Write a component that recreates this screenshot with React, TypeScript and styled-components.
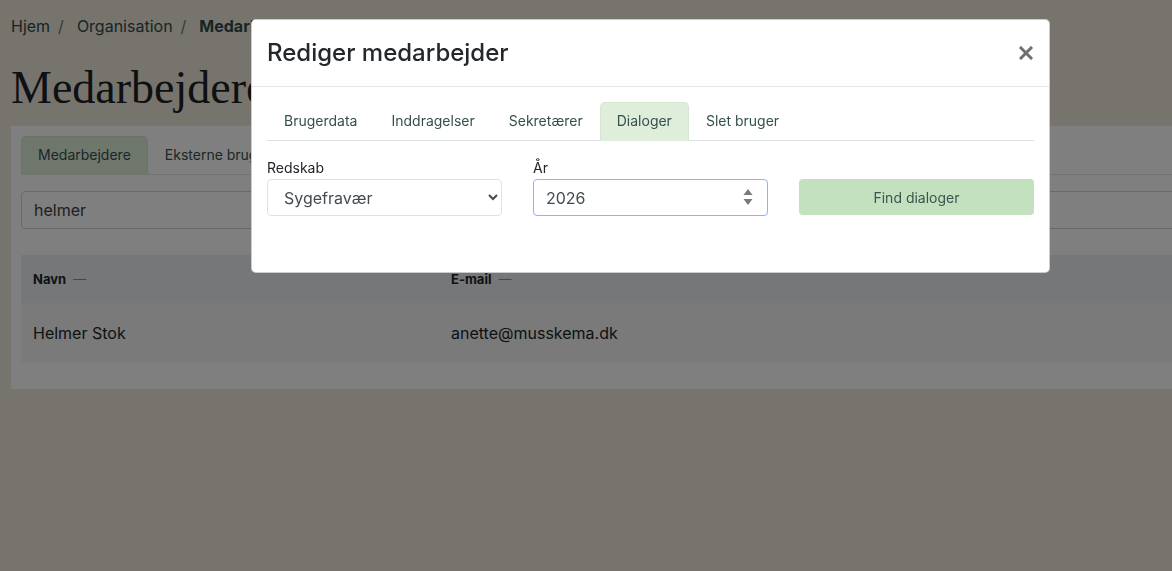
import { useState } from 'react';
import styled, { createGlobalStyle } from 'styled-components';

const GlobalStyle = createGlobalStyle`
  html, body {
    margin: 0;
    padding: 0;
    height: 100%;
    overflow: hidden;
  }
  body {
    background: #eee9db;
    font-family: Inter, "Noto Sans", sans-serif;
    color: #212529;
  }
`;

const pageTabs = ['Medarbejdere', 'Eksterne brugere'];
const modalTabs = ['Brugerdata', 'Inddragelser', 'Sekretærer', 'Dialoger', 'Slet bruger'];

function App() {
  const [activeTab, setActiveTab] = useState('Dialoger');
  const [year, setYear] = useState('2026');

  return (
    <>
      <GlobalStyle />
      <Page>
        <Breadcrumb>
          <Crumb>Hjem</Crumb>
          <Divider>/</Divider>
          <Crumb>Organisation</Crumb>
          <Divider>/</Divider>
          <Crumb $current>Medarbejdere</Crumb>
        </Breadcrumb>
        <PageTitle>Medarbejdere</PageTitle>
        <Card>
          <TabList>
            {pageTabs.map((tab, i) => (
              <Tab key={tab} $active={i === 0}>
                {tab}
              </Tab>
            ))}
          </TabList>
          <SearchInput defaultValue="helmer" />
          <Table>
            <thead>
              <tr>
                <HeadCell $width={418}>
                  Navn <SortMark>—</SortMark>
                </HeadCell>
                <HeadCell>
                  E-mail <SortMark>—</SortMark>
                </HeadCell>
              </tr>
            </thead>
            <tbody>
              <tr>
                <BodyCell>Helmer Stok</BodyCell>
                <BodyCell>anette@musskema.dk</BodyCell>
              </tr>
            </tbody>
          </Table>
        </Card>
      </Page>

      <Backdrop />
      <Modal>
        <ModalHeader>
          <ModalTitle>Rediger medarbejder</ModalTitle>
          <CloseButton aria-label="Luk">
            <svg width="14" height="14" viewBox="0 0 14 14">
              <path d="M2 2 L12 12 M12 2 L2 12" stroke="#6f6f6f" strokeWidth="3" strokeLinecap="square" />
            </svg>
          </CloseButton>
        </ModalHeader>
        <ModalBody>
          <TabList>
            {modalTabs.map((tab) => (
              <Tab key={tab} $active={tab === activeTab} onClick={() => setActiveTab(tab)}>
                {tab}
              </Tab>
            ))}
          </TabList>
          <FormRow>
            <Field>
              <Label>Redskab</Label>
              <Select defaultValue="syg">
                <option value="syg">Sygefravær</option>
                <option value="mus">MUS</option>
              </Select>
            </Field>
            <Field>
              <Label>År</Label>
              <NumberWrap>
                <YearInput value={year} onChange={(e) => setYear(e.target.value)} />
                <Spinner width="10" height="20" viewBox="0 0 10 20">
                  <path d="M5 2 L9.5 8 L0.5 8 Z" fill="#7a7a7a" />
                  <path d="M5 18 L9.5 12 L0.5 12 Z" fill="#7a7a7a" />
                </Spinner>
              </NumberWrap>
            </Field>
            <Field>
              <FindButton>Find dialoger</FindButton>
            </Field>
          </FormRow>
        </ModalBody>
      </Modal>
    </>
  );
}

const Page = styled.div`
  padding: 16px 0 0 11px;
  display: flex;
  flex-direction: column;
`;

const Breadcrumb = styled.nav`
  display: flex;
  align-items: center;
  gap: 8px;
  font-size: 16px;
  line-height: 20px;
  color: #2f4a4a;
`;

const Crumb = styled.span<{ $current?: boolean }>`
  font-weight: ${(p) => (p.$current ? 700 : 400)};
`;

const Divider = styled.span`
  color: #6c757d;
  margin-right: 5px;
`;

const PageTitle = styled.h1`
  margin: 24px 0 0;
  font-family: "Liberation Serif", "DejaVu Serif", serif;
  font-weight: 400;
  font-size: 46px;
  line-height: 56px;
  color: #1d2326;
`;

const Card = styled.div`
  margin-top: 10px;
  width: 1200px;
  background: #ffffff;
  padding: 10px 10px 26px;
  display: flex;
  flex-direction: column;
`;

const TabList = styled.div`
  display: flex;
  border-bottom: 1px solid #dee2e6;
`;

const Tab = styled.button<{ $active?: boolean }>`
  font-family: Inter, "Noto Sans", sans-serif;
  font-size: 14px;
  line-height: 20px;
  padding: 8px 16px 9px;
  margin-bottom: -1px;
  border: 1px solid ${(p) => (p.$active ? '#d6e6d3' : 'transparent')};
  border-bottom: 1px solid ${(p) => (p.$active ? '#dfeedb' : 'transparent')};
  border-radius: 5px 5px 0 0;
  background: ${(p) => (p.$active ? '#dfeedb' : 'transparent')};
  color: #35504e;
  cursor: pointer;
`;

const SearchInput = styled.input`
  margin-top: 16px;
  height: 38px;
  box-sizing: border-box;
  border: 1px solid #ced4da;
  border-radius: 4px;
  padding: 0 12px;
  font-family: Inter, "Noto Sans", sans-serif;
  font-size: 16px;
  color: #3a4044;
`;

const Table = styled.table`
  margin-top: 26px;
  border-collapse: collapse;
  width: 100%;
`;

const HeadCell = styled.th<{ $width?: number }>`
  width: ${(p) => (p.$width ? `${p.$width - 12}px` : 'auto')};
  height: 48px;
  padding: 0 0 0 12px;
  text-align: left;
  background: #eceef3;
  font-size: 13px;
  font-weight: 700;
  color: #212529;
`;

const SortMark = styled.span`
  font-weight: 400;
  color: #8a8f94;
  margin-left: 4px;
`;

const BodyCell = styled.td`
  height: 60px;
  padding: 0 0 0 12px;
  background: #f4f4f4;
  font-size: 16px;
  color: #212529;
`;

const Backdrop = styled.div`
  position: fixed;
  inset: 0;
  background: rgba(0, 0, 0, 0.5);
`;

const Modal = styled.div`
  position: fixed;
  top: 19px;
  left: 251px;
  width: 799px;
  box-sizing: border-box;
  background: #ffffff;
  border: 1px solid rgba(0, 0, 0, 0.2);
  border-radius: 5px;
  display: flex;
  flex-direction: column;
`;

const ModalHeader = styled.div`
  display: flex;
  align-items: center;
  justify-content: space-between;
  padding: 16px 15px;
  border-bottom: 1px solid #e5e5e5;
`;

const ModalTitle = styled.h5`
  margin: 0;
  font-size: 24px;
  line-height: 34px;
  font-weight: 500;
  color: #24282b;
`;

const CloseButton = styled.button`
  border: 0;
  background: transparent;
  padding: 4px;
  margin-right: -3px;
  display: flex;
  cursor: pointer;
`;

const ModalBody = styled.div`
  padding: 15px 15px 56px;
`;

const FormRow = styled.div`
  display: grid;
  grid-template-columns: repeat(3, minmax(0, 1fr));
  column-gap: 31px;
  margin-top: 17px;
  align-items: end;
`;

const Field = styled.div`
  display: flex;
  flex-direction: column;
  min-width: 0;
`;

const Label = styled.label`
  font-size: 14px;
  line-height: 20px;
  color: #212529;
  margin-bottom: 1px;
`;

const Select = styled.select`
  width: 100%;
  height: 37px;
  border: 1px solid #dee2e6;
  border-radius: 4px;
  padding: 0 8px 0 12px;
  font-family: Inter, "Noto Sans", sans-serif;
  font-size: 16px;
  color: #444b50;
  background: #ffffff;
`;

const NumberWrap = styled.div`
  position: relative;
  display: flex;
`;

const YearInput = styled.input`
  width: 100%;
  min-width: 0;
  height: 37px;
  box-sizing: border-box;
  border: 1px solid #86b7fe;
  border-radius: 4px;
  padding: 0 12px;
  font-family: Inter, "Noto Sans", sans-serif;
  font-size: 16px;
  color: #444b50;
  background: #ffffff;
  outline: none;
`;

const Spinner = styled.svg`
  position: absolute;
  right: 15px;
  top: 8px;
`;

const FindButton = styled.button`
  width: 100%;
  height: 36px;
  margin-bottom: 1px;
  border: 0;
  border-radius: 4px;
  background: #c3e0bf;
  font-family: Inter, "Noto Sans", sans-serif;
  font-size: 14px;
  color: #3a5650;
  cursor: pointer;
`;

export default App;
